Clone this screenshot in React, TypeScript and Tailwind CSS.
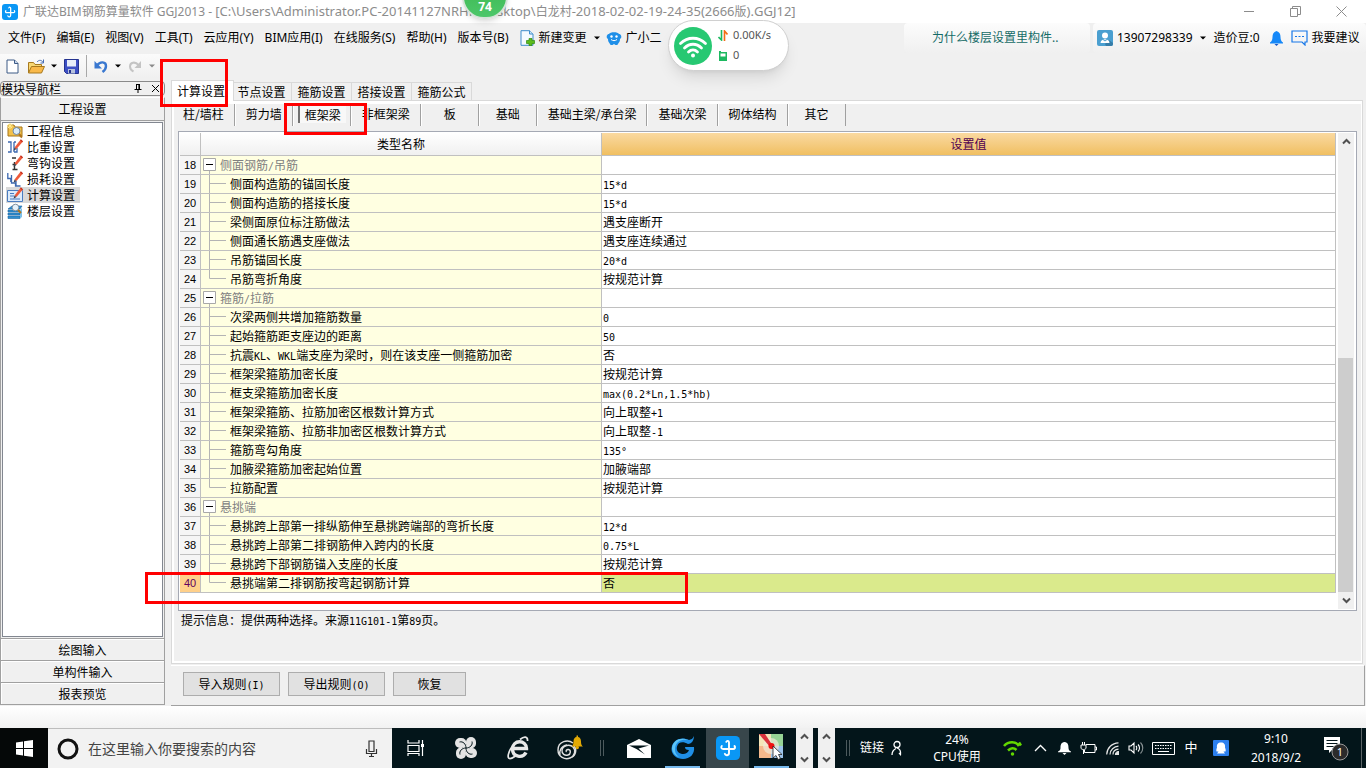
import type { ReactNode } from "react";

const menus = ["文件(F)", "编辑(E)", "视图(V)", "工具(T)", "云应用(Y)", "BIM应用(I)", "在线服务(S)", "帮助(H)", "版本号(B)"];
const tabs = ["计算设置", "节点设置", "箍筋设置", "搭接设置", "箍筋公式"];
const categories = ["柱/墙柱", "剪力墙", "框架梁", "非框架梁", "板", "基础", "基础主梁/承台梁", "基础次梁", "砌体结构", "其它"];
const navItems = ["工程信息", "比重设置", "弯钩设置", "损耗设置", "计算设置", "楼层设置"];
const inputModes = ["绘图输入", "单构件输入", "报表预览"];

type Row = { name: string; value?: string; group?: boolean };

const FIRST_ROW = 18;
const rows: Row[] = [
  { name: "侧面钢筋/吊筋", group: true },
  { name: "侧面构造筋的锚固长度", value: "15*d" },
  { name: "侧面构造筋的搭接长度", value: "15*d" },
  { name: "梁侧面原位标注筋做法", value: "遇支座断开" },
  { name: "侧面通长筋遇支座做法", value: "遇支座连续通过" },
  { name: "吊筋锚固长度", value: "20*d" },
  { name: "吊筋弯折角度", value: "按规范计算" },
  { name: "箍筋/拉筋", group: true },
  { name: "次梁两侧共增加箍筋数量", value: "0" },
  { name: "起始箍筋距支座边的距离", value: "50" },
  { name: "抗震KL、WKL端支座为梁时，则在该支座一侧箍筋加密", value: "否" },
  { name: "框架梁箍筋加密长度", value: "按规范计算" },
  { name: "框支梁箍筋加密长度", value: "max(0.2*Ln,1.5*hb)" },
  { name: "框架梁箍筋、拉筋加密区根数计算方式", value: "向上取整+1" },
  { name: "框架梁箍筋、拉筋非加密区根数计算方式", value: "向上取整-1" },
  { name: "箍筋弯勾角度", value: "135°" },
  { name: "加腋梁箍筋加密起始位置", value: "加腋端部" },
  { name: "拉筋配置", value: "按规范计算" },
  { name: "悬挑端", group: true },
  { name: "悬挑跨上部第一排纵筋伸至悬挑跨端部的弯折长度", value: "12*d" },
  { name: "悬挑跨上部第二排钢筋伸入跨内的长度", value: "0.75*L" },
  { name: "悬挑跨下部钢筋锚入支座的长度", value: "按规范计算" },
  { name: "悬挑端第二排钢筋按弯起钢筋计算", value: "否" },
];

// Half-width characters take exactly half of a full-width cell
function Mixed({ text }: { text: string }) {
  return (
    <>
      {text.split(/([\x20-\x7e°]+)/).map((part, i) =>
        i % 2 ? (
          <span key={i} className="font-['DejaVu_Sans_Mono',monospace] text-[10px] leading-none">{part}</span>
        ) : (
          part
        )
      )}
    </>
  );
}

function Caret({ className = "text-black" }: { className?: string }) {
  return (
    <svg className={`shrink-0 ${className}`} width="6" height="4" viewBox="0 0 6 4">
      <path d="M0 0.5h6L3 3.5z" fill="currentColor" />
    </svg>
  );
}

function Chevron({ up = false }: { up?: boolean }) {
  return (
    <svg width="9" height="7" viewBox="0 0 9 7" fill="none" stroke="#505050" strokeWidth="2">
      <path d={up ? "M1 5.5 4.5 2 8 5.5" : "M1 1.5 4.5 5 8 1.5"} />
    </svg>
  );
}

function AppLogo({ size }: { size: number }) {
  return (
    <svg className="shrink-0" width={size} height={size} viewBox="0 0 24 24">
      <rect width="24" height="24" rx="4.5" fill="#0a97f5" />
      <path
        d="M13 6.500v10.500c0 2.600-3.500 3-4.200.8M10.300 5.800c.6-1.500 2.700-1.200 2.700.7M5.800 10c-1.200 1.600-.2 3 1.500 3h9.800c1.800 0 2.600-1.700 1.400-3"
        fill="none"
        stroke="#fff"
        strokeWidth="1.900"
        strokeLinecap="round"
      />
    </svg>
  );
}

function Annotation({ className }: { className: string }) {
  return <span className={`pointer-events-none absolute z-20 border-[3px] border-[#ff0000] ${className}`} />;
}

function TitleBar() {
  return (
    <header className="relative flex h-[23px] items-center bg-white pl-[2px] text-[#8c8c8c]">
      <AppLogo size={16} />
      <h1 className="ml-[5px] whitespace-nowrap text-[12px]">
        广联达BIM钢筋算量软件 GGJ2013 -{" "}
        <span className="text-[13px]">
          [C:\Users\Administrator.PC-20141127NRHF\Desktop\<span className="text-[12px]">白龙村</span>-2018-02-02-19-24-35(2666<span className="text-[12px]">版</span>).GGJ12]
        </span>
      </h1>
      <div className="ml-auto flex">
        <button aria-label="最小化" className="flex h-[22px] w-[46px] items-center justify-center">
          <svg width="11" height="11" viewBox="0 0 11 11" stroke="#8c8c8c" fill="none"><path d="M0 5.500h10" /></svg>
        </button>
        <button aria-label="还原" className="flex h-[22px] w-[46px] items-center justify-center">
          <svg width="11" height="11" viewBox="0 0 11 11" stroke="#8c8c8c" fill="none"><path d="M.5 2.500h7v8h-7zM2.500 2.500v-2h8v8h-3" /></svg>
        </button>
        <button aria-label="关闭" className="mr-[2px] flex h-[22px] w-[46px] items-center justify-center">
          <svg width="11" height="11" viewBox="0 0 11 11" stroke="#8c8c8c" fill="none"><path d="M.5.5l10 10M10.500.5l-10 10" /></svg>
        </button>
      </div>
      {/* Speed-up ball hanging from the top edge */}
      <div className="absolute -top-[25px] left-[462px] z-20 flex h-[44px] w-[46px] items-end justify-center rounded-full border-2 border-[#d5e2d8] bg-gradient-to-b from-[#3bb54a] to-[#4cc76a] pb-[3px] text-[12px] font-bold leading-[14px] text-white shadow-md">
        74
      </div>
    </header>
  );
}

function NetworkPill() {
  return (
    <div className="absolute -top-[3px] left-[668px] z-20 flex h-[51px] w-[121px] items-center rounded-full border border-[#d0d0d0] bg-white pl-[5px] shadow-lg">
      <svg width="38" height="38" viewBox="0 0 38 38">
        <circle cx="19" cy="19" r="19" fill="#27c872" />
        <g fill="none" stroke="#fff" strokeWidth="2.800" strokeLinecap="round">
          <path d="M6.500 16.500c7-7 18-7 25 0" />
          <path d="M10.500 21c5-5 12-5 17 0" />
          <path d="M14.500 25c2.700-2.700 6.300-2.700 9 0" />
        </g>
        <circle cx="19" cy="28.500" r="2" fill="#fff" />
      </svg>
      <div className="ml-[6px] text-[11px] text-[#555]">
        <div className="flex h-5 items-center gap-[5px]">
          <svg width="10" height="11" viewBox="0 0 10 11" fill="none" strokeWidth="1.600">
            <path d="M3.500 0v10L.5 7" stroke="#1db960" />
            <path d="M6.500 11V1l3 3.500" stroke="#f56c14" />
          </svg>
          0.00K/s
        </div>
        <div className="flex h-5 items-center gap-[5px]">
          <svg width="10" height="11" viewBox="0 0 10 11">
            <path d="M1 1h2v1h6v9H1z" fill="#1db960" />
            <path d="M2.500 3.500h5v3h-5z" fill="#fff" />
          </svg>
          0
        </div>
      </div>
    </div>
  );
}

function MenuBar() {
  return (
    <nav className="relative flex h-[30px] items-center pl-2 text-[12px]">
      <div className="flex gap-[11px]">
        {menus.map((m) => (
          <button key={m} className="whitespace-nowrap">{m}</button>
        ))}
      </div>
      <button className="ml-[11px] flex items-center gap-1 whitespace-nowrap">
        <svg width="15" height="16" viewBox="0 0 15 16">
          <path d="M1 .7h8.500L13 4v11.300H1z" fill="#f4faff" stroke="#3e8dcc" />
          <path d="M9.500.7V4H13" fill="#cde5f7" stroke="#3e8dcc" />
          <path d="M9 8.500h3v2h2.500v3H12v2H9v-2H6.500v-3H9z" fill="#5dbb1c" stroke="#2f8a10" strokeWidth=".7" />
        </svg>
        新建变更
        <span className="ml-[3px]"><Caret /></span>
      </button>
      <button className="ml-[6px] flex items-center gap-1 whitespace-nowrap">
        <svg width="16" height="15" viewBox="0 0 16 15">
          <path d="M3 3C4 .5 12 .5 13 3c2-.5 3.500 4 1 5 0 3.500-2 4-2.500 6h-2L8 13l-1.500 1h-2C4 12 2 11.500 2 8-.5 7 1 2.500 3 3z" fill="#1f8fe8" />
          <circle cx="5.500" cy="5.500" r="1.200" fill="#fff" />
          <circle cx="10.500" cy="5.500" r="1.200" fill="#fff" />
          <path d="M5 8.500c2 1.500 4 1.500 6 0" fill="none" stroke="#fff" />
        </svg>
        广小二
      </button>
      <NetworkPill />
      <div className="ml-auto flex h-full gap-[3px] bg-[#efefef]">
        <a href="#" className="flex w-[186px] items-center rounded-sm bg-gradient-to-b from-[#fcfcfc] to-[#f0f0f0] pl-[28px] text-[#146b66]">
          为什么楼层设置里构件..
        </a>
        <div className="flex w-[273px] items-center whitespace-nowrap rounded-sm bg-gradient-to-b from-[#fcfcfc] to-[#f0f0f0] pl-1">
          <button className="flex items-center gap-1">
            <svg width="16" height="16" viewBox="0 0 16 16">
              <rect width="16" height="16" rx="2" fill="#4a9fd0" />
              <path d="M8 14l4-4 4 3v1a2 2 0 0 1-2 2H9z" fill="#367da8" />
              <circle cx="8" cy="5.500" r="3" fill="#fff" />
              <path d="M3.500 13c0-5 9-5 9 0z" fill="#fff" />
              <path d="M6 9.500l2 1.500 2-1.500" fill="none" stroke="#4a9fd0" />
            </svg>
            13907298339
            <span className="ml-[3px]"><Caret /></span>
          </button>
          <span className="ml-2">造价豆:0</span>
          <button aria-label="通知" className="ml-[10px]">
            <svg width="13" height="15" viewBox="0 0 13 15">
              <path d="M6.500 0c3 1 4 3 4 6s1 4.500 2.500 5.500v1H0v-1C1.500 10.500 2.500 9 2.500 6s1-5 4-6z" fill="#1688f8" />
              <path d="M4.500 13h4l-2 2z" fill="#1456c8" />
            </svg>
          </button>
          <button className="ml-2 flex items-center gap-1">
            <svg width="17" height="16" viewBox="0 0 17 16" fill="none" stroke="#1677e8" strokeWidth="1.200">
              <path d="M1 1h15v11h-2v3l-3-3H1z" />
              <path d="M4 6.500h9" strokeDasharray="2 1.500" />
            </svg>
            我要建议
          </button>
        </div>
      </div>
    </nav>
  );
}

function Toolbar() {
  return (
    <div className="flex h-[27px] items-start pt-px">
      <div className="flex h-6 w-[160px] items-center bg-gradient-to-b from-[#fbfbfb] to-[#f0f0f0] pl-[6px]">
        <button aria-label="新建">
          <svg width="13" height="15" viewBox="0 0 13 15">
            <path d="M1 1h7.500L12 4.500V14H1z" fill="#fff" stroke="#3d5a86" />
            <path d="M8.500 1v3.500H12" fill="#c5d7ee" stroke="#3d5a86" />
          </svg>
        </button>
        <button aria-label="打开" className="ml-[9px] flex items-center gap-[6px]">
          <svg width="17" height="15" viewBox="0 0 17 15">
            <path d="M.5 14V3.500h5l1.500 2h6.500V8" fill="#f7d774" stroke="#a7791e" />
            <path d="M.5 14 3.500 7.500h13L13.500 14z" fill="#f9b94a" stroke="#a7791e" />
            <path d="M9 3c2-2.500 5-2 6 .5M15.500.5V4h-3" fill="none" stroke="#4a6fb5" />
          </svg>
          <Caret />
        </button>
        <button aria-label="保存" className="ml-[7px]">
          <svg width="15" height="15" viewBox="0 0 15 15">
            <path d="M.5.5h14v14h-12l-2-2z" fill="#3c4fc4" stroke="#25338f" />
            <path d="M3 1h9v6.500H3z" fill="#e7edf9" />
            <path d="M4 10h7v4.500H4z" fill="#b7c2dd" />
            <path d="M5 11h2v3H5z" fill="#25338f" />
          </svg>
        </button>
        <span className="ml-[7px] h-[22px] w-px bg-[#a8a8a8]" />
        <button aria-label="撤销" className="ml-[7px] flex items-center gap-[7px]">
          <svg width="14" height="13" viewBox="0 0 14 13" fill="none">
            <path d="M3 5.500c3-4.500 9-4 9 .5 0 3-1.500 4.500-3.500 6" stroke="#3a78d0" strokeWidth="2.400" />
            <path d="M.5 1v7.500H8z" fill="#3a78d0" />
          </svg>
          <Caret />
        </button>
        <button aria-label="恢复" className="ml-[7px] flex items-center gap-[7px]">
          <svg width="14" height="13" viewBox="0 0 14 13" fill="none">
            <path d="M10.500 5C7 1 2 2.500 2 6.500c0 2.500 1.500 4 3.500 5" stroke="#c4c4c4" strokeWidth="2" />
            <path d="M13 1v7H6.500z" fill="#c4c4c4" />
          </svg>
          <Caret className="text-[#8a8a8a]" />
        </button>
      </div>
    </div>
  );
}

function Pencil() {
  return (
    <>
      <path d="M7.500 8.500 13.500.8l2.200 1.900L9.500 10z" fill="#ee5a3a" />
      <path d="M7.500 8.500 9.500 10l-3 1.700z" fill="#40414d" />
      <path d="M13.500.8l2.200 1.900" stroke="#c22a1a" strokeWidth="1.200" />
    </>
  );
}

const navIcons: ReactNode[] = [
  <>
    <path d="M1 2h6l1 2h7v9H1z" fill="#f2c14c" stroke="#a67417" />
    <circle cx="9.500" cy="8" r="3.500" fill="#d9ecfa" stroke="#6d84a0" />
    <path d="M12 11l3 3.500" stroke="#b0761d" strokeWidth="2" />
    <path d="M3 0v6M0 3h6M1 1l4 4M5 1L1 5" stroke="#ffe98a" />
  </>,
  <>
    <path d="M1 3h3v10H1M7 3v10M7 3h2M7 13h3V9" fill="none" stroke="#3c68b0" strokeWidth="1.300" />
    <Pencil />
  </>,
  <>
    <path d="M5 3h4M7.500 7v7M5.500 9.500h3M5.500 14.500h5" fill="none" stroke="#333" strokeWidth="1.400" />
    <Pencil />
  </>,
  <>
    <path d="M.8 2v5.500h3V11M4.500 4v8h4v3h5M9 10v5" fill="none" stroke="#3c68b0" strokeWidth="1.300" />
    <Pencil />
  </>,
  <>
    <path d="M.5 3.500h15v11H.5z" fill="#dcebfb" stroke="#4a7cc0" />
    <path d="M3 6.500h4M3 9h4M3 12h10" stroke="#4a7cc0" />
    <Pencil />
  </>,
  <>
    <path d="M1 6l4-3h10l-2 3zM1 7h12v2H1zM1 10h12v2H1zM1 13h12v2.500H1z" fill="#2f8fd0" stroke="#1c66a3" strokeWidth=".6" />
    <path d="M13 7l2-2v9l-2 1.500z" fill="#7cc0ea" />
    <circle cx="8.500" cy="4.500" r="3.300" fill="#e6f2fa" stroke="#8291a0" />
    <path d="M11 7l3 3" stroke="#b0761d" strokeWidth="1.800" />
  </>,
];

function Sidebar() {
  return (
    <aside className="flex w-[165px] shrink-0 flex-col py-px">
      <div className="flex h-[15px] items-center rounded-sm border border-[#8a8a8a]">
        <h2 className="leading-none">模块导航栏</h2>
        <button aria-label="固定" className="ml-auto">
          <svg width="8" height="9" viewBox="0 0 8 9" fill="none" stroke="#000"><path d="M2 .5h4M2.500 0v5M5.500 0v5M4.900 0v5M.5 5.500h7M4 6v3" /></svg>
        </button>
        <button aria-label="关闭" className="ml-[10px] mr-[5px]">
          <svg width="7" height="7" viewBox="0 0 7 7" stroke="#000"><path d="M0 0l7 7M7 0L0 7" /></svg>
        </button>
      </div>
      <button className="mt-px h-[24px] border border-[#a0a0a0] border-t-white">工程设置</button>
      <div className="flex flex-1 flex-col border border-[#a0a0a0] border-t-0 p-px">
        <ul className="flex-1 border border-[#828790] bg-white px-[3px]">
          {navItems.map((item, i) => (
            <li key={item} className="h-4">
              <a href="#" className={`flex h-4 w-[74px] items-center gap-1 pl-px leading-4 ${i === 4 ? "bg-[#d9d9d9]" : ""}`}>
                <svg className="shrink-0" width="16" height="16" viewBox="0 0 16 16">{navIcons[i]}</svg>
                {item}
              </a>
            </li>
          ))}
        </ul>
      </div>
      {inputModes.map((mode) => (
        <button key={mode} className="h-[22px] border border-t-0 border-[#a0a0a0] shadow-[inset_1px_1px_0_#fff]">{mode}</button>
      ))}
    </aside>
  );
}

function SettingsGrid() {
  return (
    <div className="mx-1 mt-[5px] flex flex-1 border border-[#a5a9b4] bg-white p-px">
      <div className="flex-1">
        <table className="w-full table-fixed border-separate border-spacing-0">
          <colgroup>
            <col className="w-[21px]" />
            <col className="w-[401px]" />
            <col />
          </colgroup>
          <thead>
            <tr className="h-[23px]">
              <th className="border-b border-r border-[#c0c0c0] bg-gradient-to-b from-white to-[#f0f0f0]"></th>
              <th className="border-b border-r border-[#c0c0c0] bg-gradient-to-b from-white to-[#f0f0f0] p-0 font-normal">类型名称</th>
              <th className="border-b border-r border-[#c0c0c0] bg-gradient-to-b from-[#fad9a0] to-[#f0bf60] p-0 font-normal text-[#500050]">设置值</th>
            </tr>
          </thead>
          <tbody>
            {rows.map((row, i) => {
              const last = i === rows.length - 1;
              const lastChild = last || rows[i + 1].group;
              return (
                <tr key={i} className="h-[19px] leading-[18px]">
                  <td className={`relative border-b border-r border-[#c0c0c0] p-0 text-center font-['Liberation_Sans',sans-serif] text-[11px] ${last ? "bg-[#ffd08a] text-[#600060]" : "bg-[#f5f5f5]"}`}>
                    {FIRST_ROW + i}
                    {last && <Annotation className="-left-[35px] -top-[2px] h-[32px] w-[543px]" />}
                  </td>
                  <td className="border-b border-r border-[#c0c0c0] bg-[#ffffe1] p-0">
                    <div className="flex h-[18px] items-center whitespace-nowrap">
                      {row.group ? (
                        <>
                          <button aria-label="折叠" className="ml-[2px] mr-1">
                            <svg className="block" width="13" height="18" viewBox="0 0 13 18" fill="none">
                              <path d="M6.500 15v3" stroke="#b4b4b4" />
                              <path d="M.5 2.500h12v12H.5z" fill="#fff" stroke="#a8a8a8" />
                              <path d="M3 8.500h7" stroke="#000" />
                            </svg>
                          </button>
                          <span className="text-[#808080]"><Mixed text={row.name} /></span>
                        </>
                      ) : (
                        <>
                          <svg className="mr-1 block" width="25" height="18" viewBox="0 0 25 18" fill="none" stroke="#b4b4b4">
                            <path d={lastChild ? "M8.500 0v8.500H25" : "M8.500 0v18M8.500 8.500H25"} />
                          </svg>
                          <span><Mixed text={row.name} /></span>
                        </>
                      )}
                    </div>
                  </td>
                  <td className={`border-b border-r border-[#c0c0c0] p-0 ${last ? "bg-[#daea8c]" : "bg-white"}`}>
                    <div className="h-[18px] overflow-hidden whitespace-nowrap pl-px">
                      <Mixed text={row.value ?? ""} />
                    </div>
                  </td>
                </tr>
              );
            })}
          </tbody>
        </table>
      </div>
      <div className="ml-[2px] mr-px flex w-4 flex-col bg-[#f0f0f0]">
        <button aria-label="向上滚动" className="flex h-[17px] items-center justify-center"><Chevron up /></button>
        <div className="flex flex-1 flex-col justify-end">
          <div className="h-[53%] w-[15px] bg-[#cdcdcd]" />
        </div>
        <button aria-label="向下滚动" className="flex h-[17px] items-center justify-center"><Chevron /></button>
      </div>
    </div>
  );
}

function Workspace() {
  return (
    <main className="flex min-w-0 flex-1 flex-col pl-[6px] pr-px">
      <div className="flex items-end" role="tablist">
        {tabs.map((tab, i) =>
          i === 0 ? (
            <button key={tab} role="tab" aria-selected className="relative z-10 -mb-px -mr-[2px] h-[21px] w-[63px] border border-b-0 border-[#d9d9d9] bg-white pr-[3px]">
              {tab}
              <Annotation className="-left-[12px] -top-[22px] h-[48px] w-[68px]" />
            </button>
          ) : (
            <button key={tab} role="tab" aria-selected={false} className="h-[18px] w-[60px] border border-b-0 border-l-0 border-[#d9d9d9] leading-[18px]">
              {tab}
            </button>
          )
        )}
      </div>
      <div className="mr-[2px] flex flex-1 flex-col border border-[#d9d9d9] bg-white pb-[2px] pl-[2px] pr-px pt-[3px]">
        <div className="flex flex-1 flex-col bg-[#f0f0f0]">
          <div className="flex h-[22px]">
            {categories.map((c, i) => (
              <button
                key={c}
                className="relative flex min-w-[58px] items-center justify-center whitespace-nowrap border-r border-[#a0a0a0] pb-[2px] pl-[11px] pr-[10px] first:pl-[9px] not-last:shadow-[1px_0_0_#fff]"
              >
                {i === 2 ? (
                  <span className="-mx-[6px] border-l-2 border-t border-l-[#707070] border-t-[#a0a0a0] bg-[#f8f8f8] px-[5px] leading-[17px]">{c}</span>
                ) : (
                  c
                )}
                {i === 2 && <Annotation className="-left-[9px] -top-px h-[32px] w-[83px]" />}
              </button>
            ))}
          </div>
          <SettingsGrid />
          <p className="h-[50px] pl-[7px] leading-[18px]"><Mixed text="提示信息：提供两种选择。来源11G101-1第89页。" /></p>
        </div>
      </div>
      <div className="mt-px flex h-[41px] gap-2 border-b border-r border-t border-b-[#a0a0a0] border-r-[#a0a0a0] border-t-white pl-3 pt-[6px]">
        <button className="h-6 w-[97px] border border-[#adadad] bg-[#e1e1e1]"><Mixed text="导入规则(I)" /></button>
        <button className="h-6 w-[97px] border border-[#adadad] bg-[#e1e1e1]"><Mixed text="导出规则(O)" /></button>
        <button className="h-6 w-[73px] border border-[#adadad] bg-[#e1e1e1]">恢复</button>
      </div>
    </main>
  );
}

function TaskButton({ label, className, children }: { label: string; className: string; children: ReactNode }) {
  return (
    <button aria-label={label} className={`flex h-full shrink-0 items-center justify-center ${className}`}>
      {children}
    </button>
  );
}

function ScrollStub() {
  return (
    <div className="flex h-full w-[17px] shrink-0 flex-col items-center justify-between bg-[#f0f0f0] py-[5px]">
      <Chevron up />
      <Chevron />
    </div>
  );
}

function Grip() {
  return <span className="h-4 w-1 shrink-0 border-x border-[#4d5a5d]" />;
}

function Taskbar() {
  return (
    <footer className="flex h-10 items-center bg-[#03151a] text-white">
      <TaskButton label="开始" className="w-12 bg-[#050808]">
        <svg width="17" height="17" viewBox="0 0 17 17" fill="#fff">
          <path d="M0 2.500 7 1.500V8H0zM8 1.300 17 0v8H8zM0 9h7v6.500L0 14.500zM8 9h9v8l-9-1.300z" />
        </svg>
      </TaskButton>
      <div className="flex h-full w-[344px] shrink-0 items-center border-t border-[#bdbdbd] bg-[#f2f2f2] pl-[9px] pr-[14px]">
        <svg width="22" height="22" viewBox="0 0 22 22"><circle cx="11" cy="11" r="9" fill="none" stroke="#111" strokeWidth="3" /></svg>
        <input
          aria-label="搜索"
          placeholder="在这里输入你要搜索的内容"
          className="ml-[9px] min-w-0 flex-1 bg-transparent text-[14px] text-[#444] outline-none placeholder:text-[#444]"
        />
        <svg width="13" height="18" viewBox="0 0 13 18" fill="none" stroke="#333" strokeWidth="1.200">
          <path d="M4 1h5v10.500H4zM1.500 9v4.500h10V9M6.500 13.500V17M4 16.500h5" />
        </svg>
      </div>
      <TaskButton label="任务视图" className="w-12">
        <svg width="18" height="16" viewBox="0 0 18 16" fill="none" stroke="#fff" strokeWidth="1.200">
          <path d="M1 0v3h11V0M1 5.500h11v6H1zM1 16v-2.500h11V16M15.500 0v16" />
          <path d="M14 4h3v3h-3z" fill="#fff" stroke="none" />
        </svg>
      </TaskButton>
      <TaskButton label="风车" className="w-[52px]">
        <svg width="22" height="22" viewBox="0 0 22 22">
          <g fill="#e4e4e4">
            <rect x="0" y="1" width="11.500" height="10" rx="5" />
            <rect x="11" y="0" width="10" height="11.500" rx="5" />
            <rect x="10.500" y="11" width="11.500" height="10" rx="5" />
            <rect x="1" y="10.500" width="10" height="11.500" rx="5" />
            <path d="M8 8h6v6H8z" />
          </g>
          <path d="M4.500 5C8 4 11 7 11 11M17 4.500C18 8 15 11 11 11M17.500 17C14 18 11 15 11 11M5 17.500C4 14 7 11 11 11" fill="none" stroke="#03151a" />
        </svg>
      </TaskButton>
      <TaskButton label="浏览器" className="w-[52px]">
        <svg width="22" height="24" viewBox="0 0 22 24" fill="none" stroke="#e8e8e8">
          <path d="M19 16.500c-3 6-13.500 5-13.500-3.500 0-9.500 14-9.500 14-.5H7" strokeWidth="3.400" />
          <path d="M13 3.500C17 0 21 0 20.500 5M5.500 10C1 16 0 22 2.500 22.500c2 .3 4-1 6-2.500" strokeWidth="1.700" />
        </svg>
      </TaskButton>
      <TaskButton label="安全浏览器" className="w-[52px]">
        <svg width="28" height="26" viewBox="0 0 28 26" fill="none" stroke="#e0e0e0" strokeWidth="1.400">
          <path d="M17 8C12 4 2 6 2 15c0 7 7 10 12 8 5-1.800 6-8 3-11-3-3-10-2-11 3-.5 4 3 6 6 5 3-.8 3-5 .5-5.500-2-.3-3 1.500-2 2.500" />
          <path d="M4 20c-1-4 1-9 7-10M18 11c3 3 2 9-2 11" />
          <path d="M15.500 11.500c1.500-1 2-2.500 2-5C17.500 3.500 19 2 20.500 2V.5h1.500V2c1.500 0 3 1.500 3 4.500 0 2.500.5 4 2 5z" fill="#e2a905" stroke="none" />
          <circle cx="21.300" cy="12.500" r="1.700" fill="#e2a905" stroke="none" />
        </svg>
      </TaskButton>
      <span className="ml-1 flex"><Grip /></span>
      <TaskButton label="邮件" className="ml-[9px] w-[52px]">
        <svg width="24" height="19" viewBox="0 0 24 19" fill="#fff">
          <path d="M0 6 12 0l12 6v13H0z" />
          <path d="M2 6.500h20L11.500 9.500 18 15.500 9.500 10z" fill="#03151a" />
        </svg>
      </TaskButton>
      <TaskButton label="浏览器" className="w-[35px] border-b-2 border-[#76b9ed]">
        <svg width="24" height="24" viewBox="0 0 24 24">
          <path d="M23 1c-1 3-3 3.500-5 4C10 1 1 5 .5 14 .5 20 6 24 12 24c7 0 12-5 11-12h-9c0 2 1 3 4 3-1 3-4 4.500-7 4-4-.7-6-4-5-7.500C7 7 12 6 17 9c3 0 6-3 6-8z" fill="#1f8fe6" />
          <path d="M1 13C2 5 10 2 17 5c-6-1-12 1-13 8-.5 4 1 7 4 9-4-1-7-5-7-9z" fill="#5cc4f7" />
        </svg>
      </TaskButton>
      <TaskButton label="广联达" className="ml-[6px] w-[43px] bg-[#38464b]">
        <AppLogo size={24} />
      </TaskButton>
      <TaskButton label="地图" className="ml-[5px] mr-[7px] w-[35px] border-b-2 border-[#76b9ed]">
        <svg width="26" height="26" viewBox="0 0 26 26">
          <path d="M0 0h24v24H0z" fill="#f4e6b8" />
          <path d="M12 0h12v12H12z" fill="#96d495" />
          <path d="M12 12h12v12H12z" fill="#9cc4ea" />
          <path d="M0 12h12v12H0z" fill="#f5b98c" />
          <circle cx="12" cy="12" r="8" fill="#f1ead8" opacity=".7" />
          <path d="M0 0h6l8 12-3 1z" fill="#d9323c" />
          <circle cx="12.500" cy="12" r="3" fill="#f01010" />
          <path d="M14 12v12l3-2.500 2 4 2.500-1-2-4H23z" fill="#fff" stroke="#222" strokeWidth=".8" />
        </svg>
      </TaskButton>
      <ScrollStub />
      <span className="w-[5px] shrink-0" />
      <ScrollStub />

      <div className="ml-auto flex h-full shrink-0 items-center whitespace-nowrap text-[12px]">
        <Grip />
        <a href="#" className="ml-[10px]">链接</a>
        <svg className="ml-[7px]" width="11" height="16" viewBox="0 0 11 16" fill="none" stroke="#fff" strokeWidth="1.300">
          <circle cx="6" cy="4.500" r="3" /><path d="M1 15c0-3 1-5 4-6.500M6 8c3 1 4 3 3.500 6.500L8 13" />
        </svg>
        <div className="ml-[25px] w-[60px] text-center leading-[17px]">24%<br />CPU使用</div>
        <TaskButton label="无线" className="ml-3 w-[26px]">
          <svg width="19" height="16" viewBox="0 0 19 16" fill="none" stroke="#63d800" strokeWidth="2.600">
            <path d="M1 6c4.500-5 12-5 15 0M5 10.500c3-3 6-3 8.500-.5" /><circle cx="9.500" cy="14" r="1" fill="#63d800" stroke="#63d800" strokeWidth="1.500" /><path d="M16 2.500l2 3" />
          </svg>
        </TaskButton>
        <TaskButton label="显示隐藏的图标" className="ml-[3px] w-6">
          <svg width="13" height="8" viewBox="0 0 13 8" fill="none" stroke="#fff" strokeWidth="1.300"><path d="M1 7l5.500-5.500L12 7" /></svg>
        </TaskButton>
        <TaskButton label="提醒" className="w-6">
          <svg width="13" height="13" viewBox="0 0 13 13" fill="#fff"><path d="M6.500 0C10 .5 10.500 3 10.500 6c0 2 1 3 2.500 3.500v.8H0v-.8C1.500 9 2.500 8 2.500 6c0-3 .5-5.500 4-6zM4.500 11h4l-2 2z" /></svg>
        </TaskButton>
        <TaskButton label="电源" className="w-6">
          <svg width="17" height="13" viewBox="0 0 17 13" fill="none" stroke="#fff"><path d="M6 2.500h9v8H4.500V8M15 5h1.500v3H15M1 3h5v3C6 8 1 8 1 6zM2.500 0v3M4.500 0v3M3.500 8v4" /></svg>
        </TaskButton>
        <TaskButton label="网络" className="w-6">
          <svg width="13" height="13" viewBox="0 0 13 13" fill="none" stroke="#e4e4e4" strokeWidth="1.200"><path d="M.7 12.500C1 6 6 1 12.500.8M4 12.500c0-4.500 4-8 8.500-8.300M7 12.500c0-3 2.500-5 5.500-5.300" /><path d="M9.500 12.500c0-1.500 1.500-3 3-3v3z" fill="#e4e4e4" /></svg>
        </TaskButton>
        <TaskButton label="音量" className="w-6">
          <svg width="16" height="14" viewBox="0 0 16 14" fill="none" stroke="#fff" strokeWidth="1.100"><path d="M1 5h2l3-3v10L3 9H1zM8 5c1 1 1 3 0 4M10 3.500c2 2 2 5 0 7" /><path d="M12.500 1.500c3 3 3 8 0 11" stroke="#8a9294" /></svg>
        </TaskButton>
        <TaskButton label="触摸键盘" className="w-[30px]">
          <svg width="23" height="13" viewBox="0 0 23 13" fill="none" stroke="#fff"><path d="M.5.5h22v12H.5z" /><path d="M3 3.500h17M3 6.500h17" strokeDasharray="1.500 1" /><path d="M6 9.500h11" /></svg>
        </TaskButton>
        <TaskButton label="输入法" className="w-[26px] text-[13px]">中</TaskButton>
        <TaskButton label="电脑管家" className="ml-[3px] w-[28px]">
          <svg width="16" height="16" viewBox="0 0 16 16"><rect width="16" height="16" rx="1" fill="#2c7fee" /><path d="M8 2.500c3 0 4.500 2 4 5 .5 1 1 3 .5 4h-2L12 13.500H4L5.500 11.500h-2c-.5-1 0-3 .5-4-.5-3 1-5 4-5z" fill="#fff" /></svg>
        </TaskButton>
        <time className="ml-[10px] w-[62px] text-center leading-[19px]">9:10<br />2018/9/2</time>
        <TaskButton label="操作中心" className="ml-[15px] w-[28px]">
          <svg width="26" height="26" viewBox="0 0 26 26">
            <path d="M1 2h16v13h-8l-3 3v-3H1z" fill="#fff" />
            <path d="M3.500 5.500h11M3.500 8.500h11M3.500 11.500h7" stroke="#03151a" />
            <circle cx="17" cy="17" r="8" fill="#2b2b2b" stroke="#999" />
            <text x="17" y="21" fontSize="11" textAnchor="middle" fill="#fff">1</text>
          </svg>
        </TaskButton>
        <span className="ml-[11px] mr-1 h-full w-px bg-[#5b6466]" />
      </div>
    </footer>
  );
}

export default function App() {
  return (
    <div className="flex min-h-screen flex-col overflow-x-hidden bg-[#f0f0f0] font-['Noto_Sans','Noto_Sans_CJK_SC',sans-serif] text-[12px] text-black">
      <TitleBar />
      <MenuBar />
      <Toolbar />
      <div className="flex flex-1 font-['Noto_Sans_CJK_SC',sans-serif]">
        <Sidebar />
        <Workspace />
      </div>
      <div className="h-[22px] bg-gradient-to-b from-white to-[#f2f2f2]" />
      <Taskbar />
    </div>
  );
}
